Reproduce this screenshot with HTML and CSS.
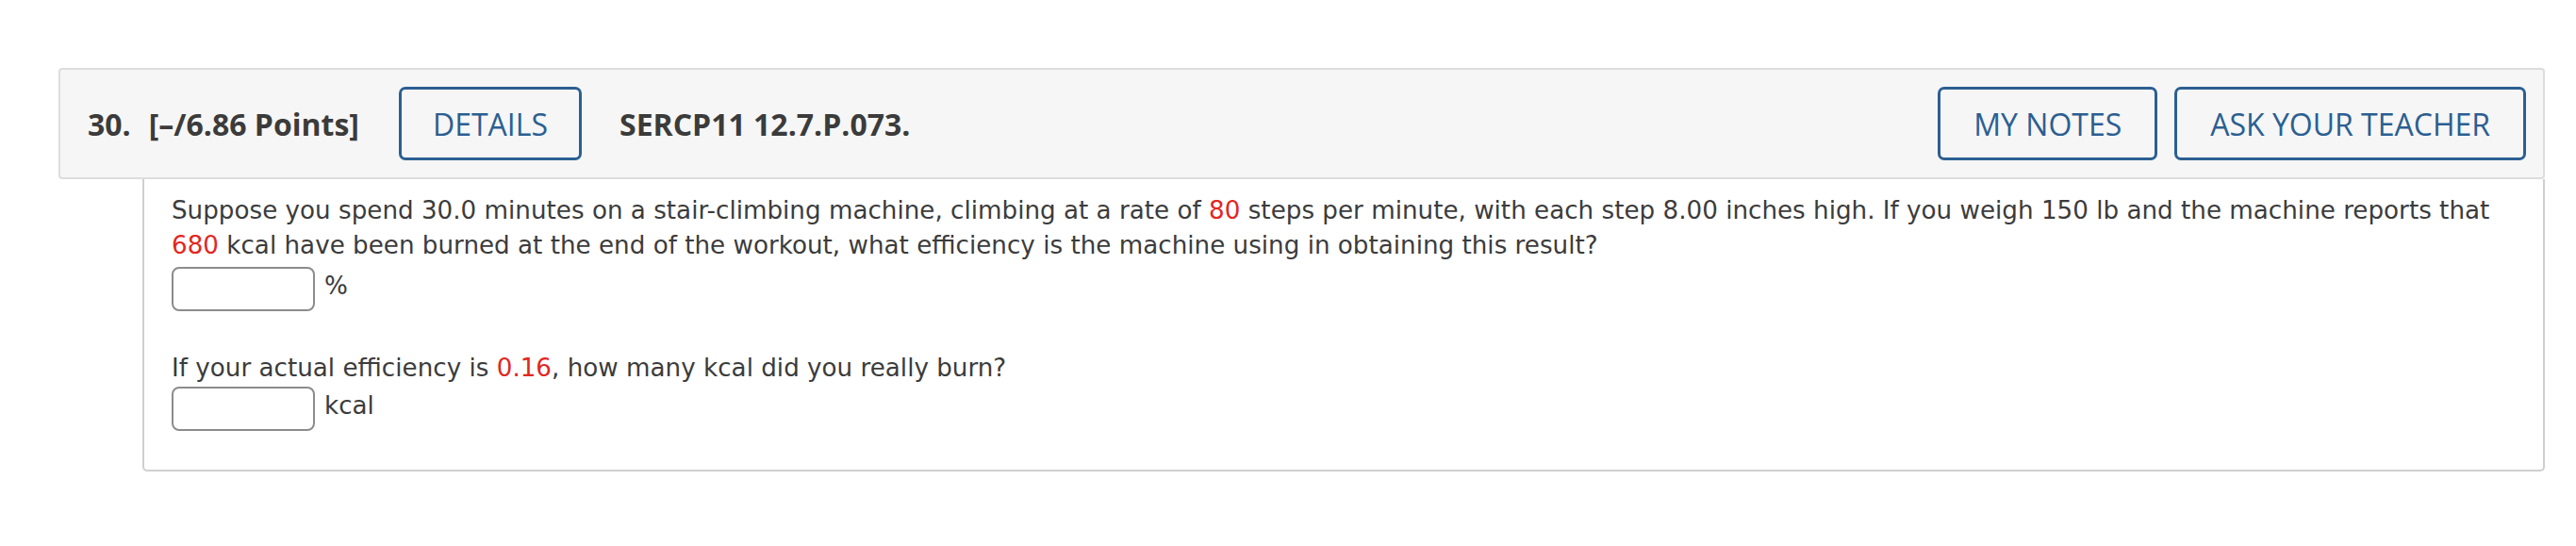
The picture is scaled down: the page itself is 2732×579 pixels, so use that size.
FILE: index.html
```html
<!DOCTYPE html>
<html lang="en">
<head>
<meta charset="utf-8">
<title>Question 30</title>
<link rel="stylesheet" href="styles.css">
</head>
<body>
<div class="page">
  <div class="question">
    <div class="q-header">
      <span class="q-num">30.</span>
      <span class="q-points">[–/6.86 Points]</span>
      <button class="btn btn-details" type="button">DETAILS</button>
      <span class="q-code">SERCP11 12.7.P.073.</span>
      <button class="btn btn-notes" type="button">MY NOTES</button>
      <button class="btn btn-ask" type="button">ASK YOUR TEACHER</button>
    </div>
    <div class="q-body">
      <p class="q-text">Suppose you spend 30.0 minutes on a stair-climbing machine, climbing at a rate of <span class="red">80</span> steps per minute, with each step 8.00 inches high. If you weigh 150 lb and the machine reports that <span class="red">680</span> kcal have been burned at the end of the workout, what efficiency is the machine using in obtaining this result?</p>
      <div class="answer answer-first">
        <input class="answer-input" type="text" aria-label="efficiency">
        <span class="unit">%</span>
      </div>
      <p class="q-text q-text-second">If your actual efficiency is <span class="red">0.16</span>, how many kcal did you really burn?</p>
      <div class="answer answer-second">
        <input class="answer-input" type="text" aria-label="kcal burned">
        <span class="unit">kcal</span>
      </div>
    </div>
  </div>
</div>
</body>
</html>
```

FILE: styles.css
```css
html, body {
  margin: 0;
  padding: 0;
  background: #ffffff;
}

.page {
  padding: 72px 33px 0 62px;
}

.q-header {
  box-sizing: border-box;
  height: 118px;
  display: flex;
  align-items: center;
  background: #f6f6f6;
  border: 2px solid #dddddd;
  border-radius: 4px;
  padding: 0 18px 0 29px;
  font-family: "Open Sans", "Liberation Sans", sans-serif;
  color: #3b3b3b;
}

.q-num,
.q-points,
.q-code {
  font-size: 32px;
  font-weight: 700;
  white-space: nowrap;
}

.q-points {
  margin-left: 19px;
}

.btn {
  box-sizing: border-box;
  height: 78px;
  padding: 0 35px;
  display: flex;
  align-items: center;
  background: transparent;
  border: 3px solid #2b5f92;
  border-radius: 7px;
  color: #2b5f92;
  font-family: "Open Sans", "Liberation Sans", sans-serif;
  font-size: 32px;
  font-weight: 400;
  white-space: nowrap;
  cursor: pointer;
}

.btn-details {
  margin-left: 42px;
  padding: 0 33px;
}

.q-code {
  margin-left: 40px;
}

.btn-notes {
  margin-left: auto;
}

.btn-ask {
  margin-left: 18px;
}

.q-body {
  margin-left: 89px;
  border: 2px solid #cfcfcf;
  border-top: none;
  border-radius: 0 0 5px 5px;
  padding: 15px 29px 41px 29px;
  font-family: "DejaVu Sans", Verdana, sans-serif;
  font-size: 26.2px;
  line-height: 37px;
  color: #3c3c3c;
}

.q-text {
  margin: 0;
}

.q-text-second {
  margin-top: 42px;
}

.red {
  color: #e3261f;
}

.answer {
  display: flex;
  align-items: flex-start;
}

.answer-first {
  margin-top: 4px;
}

.answer-second {
  margin-top: 1px;
}

.answer-input {
  box-sizing: border-box;
  width: 152px;
  height: 47px;
  margin: 0;
  border: 2px solid #8c8c8c;
  border-radius: 8px;
  background: #ffffff;
  font-family: "DejaVu Sans", Verdana, sans-serif;
  font-size: 24px;
  outline: none;
}

.unit {
  margin-left: 10px;
  margin-top: 2px;
  line-height: 37px;
}
```
